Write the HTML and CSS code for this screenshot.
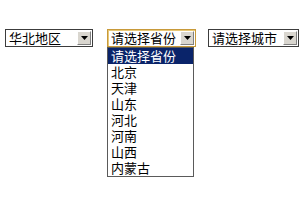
FILE: index.html
```html
<!DOCTYPE html>
<html lang="zh-CN">
<head>
    <meta charset="UTF-8">
    <title>省市联动</title>
    <link rel="stylesheet" href="styles.css">
</head>
<body>
    <div class="picker">
        <div class="select region">
            <span class="value">华北地区</span>
            <span class="arrow"><svg width="7" height="4" viewBox="0 0 7 4"><path d="M0 0h7L3.5 4z" fill="#000"/></svg></span>
        </div>

        <div class="select-wrap">
            <div class="select province focused">
                <span class="value">请选择省份</span>
                <span class="arrow"><svg width="7" height="4" viewBox="0 0 7 4"><path d="M0 0h7L3.5 4z" fill="#000"/></svg></span>
            </div>
            <ul class="dropdown">
                <li class="active">请选择省份</li>
                <li>北京</li>
                <li>天津</li>
                <li>山东</li>
                <li>河北</li>
                <li>河南</li>
                <li>山西</li>
                <li>内蒙古</li>
            </ul>
        </div>

        <div class="select city">
            <span class="value">请选择城市</span>
            <span class="arrow"><svg width="7" height="4" viewBox="0 0 7 4"><path d="M0 0h7L3.5 4z" fill="#000"/></svg></span>
        </div>
    </div>
</body>
</html>
```

FILE: styles.css
```css
* {
    margin: 0;
    padding: 0;
    box-sizing: border-box;
}

body {
    font-family: "Noto Sans CJK SC", "Liberation Sans", sans-serif;
    font-size: 13px;
    background: #fff;
    color: #000;
}

.picker {
    display: flex;
    align-items: flex-start;
    padding: 29px 0 0 5px;
}

.select-wrap {
    display: flex;
    flex-direction: column;
    margin-left: 14px;
}

.select {
    display: flex;
    align-items: center;
    height: 18px;
    border: 1px solid #3c3c3c;
    background: #fff;
}

.region { width: 88px; }
.province { width: 89px; }
.city { width: 91px; margin-left: 12px; }

.focused {
    border-color: #c89a3a;
    box-shadow: inset 1px 1px 0 #e8c877;
}

.value {
    flex: 1;
    padding-left: 3px;
    line-height: 16px;
    white-space: nowrap;
}

.arrow {
    display: flex;
    align-items: center;
    justify-content: center;
    width: 14px;
    height: 14px;
    margin-right: 1px;
    background: #d9d6cf;
    border: 1px solid;
    border-color: #fff #808080 #808080 #fff;
}

.dropdown {
    width: 87px;
    list-style: none;
    background: #fff;
    border: 1px solid #5a5a5a;
}

.dropdown li {
    height: 16px;
    line-height: 16px;
    padding-left: 3px;
    white-space: nowrap;
}

.dropdown .active {
    background: #0a246a;
    color: #fff;
}
```
